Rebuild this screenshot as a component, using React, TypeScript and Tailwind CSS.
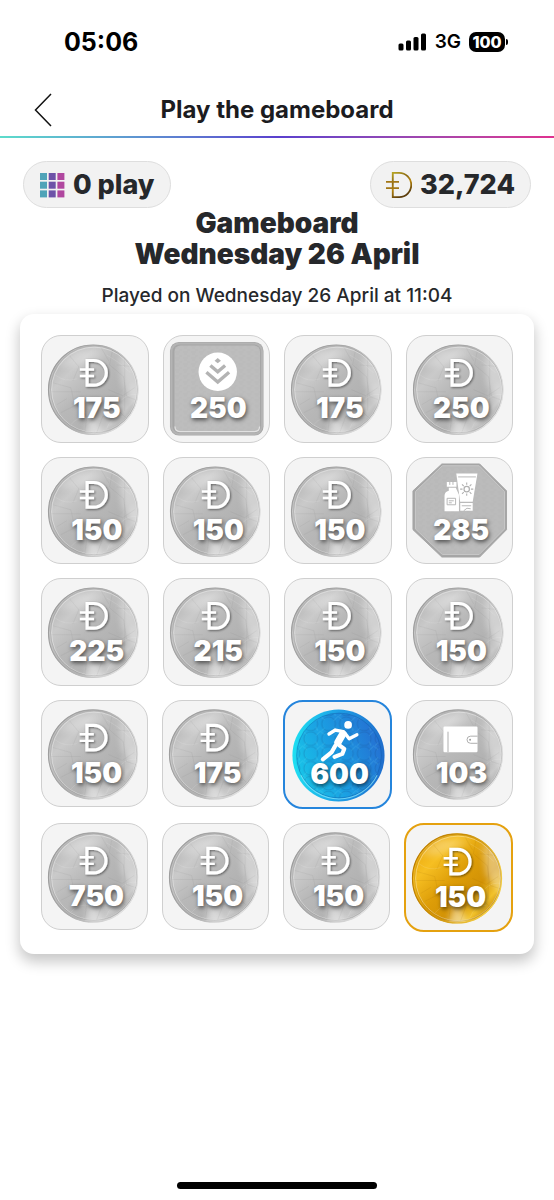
import type { ReactNode } from 'react';

type Art = 'coin' | 'gold' | 'badge' | 'care' | 'run' | 'wallet';

interface Tile {
  value: number;
  art: Art;
}

const coin = (value: number): Tile => ({ value, art: 'coin' });

const board: Tile[][] = [
  [coin(175), { value: 250, art: 'badge' }, coin(175), coin(250)],
  [coin(150), coin(150), coin(150), { value: 285, art: 'care' }],
  [coin(225), coin(215), coin(150), coin(150)],
  [coin(150), coin(175), { value: 600, art: 'run' }, { value: 103, art: 'wallet' }],
  [coin(750), coin(150), coin(150), { value: 150, art: 'gold' }],
];

const borders: Partial<Record<Art, string>> = {
  run: 'border-2 border-[#2585dc]',
  gold: 'border-2 border-[#e5a10f]',
};

/* Gradients and textures shared by every tile */
function ArtDefs() {
  return (
    <svg className="absolute size-0" aria-hidden="true">
      <defs>
        <linearGradient id="silver" x1="0.1" y1="0.1" x2="0.9" y2="0.9">
          <stop offset="0" stopColor="#b3b3b3" />
          <stop offset="0.22" stopColor="#cacaca" />
          <stop offset="0.45" stopColor="#b8b8b8" />
          <stop offset="0.7" stopColor="#b2b2b2" />
          <stop offset="0.86" stopColor="#c9c9c9" />
          <stop offset="1" stopColor="#a6a6a6" />
        </linearGradient>
        <linearGradient id="goldFill" x1="0.1" y1="0.1" x2="0.9" y2="0.9">
          <stop offset="0" stopColor="#eaa90f" />
          <stop offset="0.22" stopColor="#f6bf22" />
          <stop offset="0.48" stopColor="#dd9d08" />
          <stop offset="0.7" stopColor="#d29205" />
          <stop offset="0.86" stopColor="#f2c22a" />
          <stop offset="1" stopColor="#b77b08" />
        </linearGradient>
        <linearGradient id="blueFill" x1="0" y1="0.7" x2="1" y2="0.3">
          <stop offset="0" stopColor="#18c5e8" />
          <stop offset="0.45" stopColor="#1b9de2" />
          <stop offset="1" stopColor="#256fd2" />
        </linearGradient>
        <linearGradient id="blueRim" x1="0" y1="0.5" x2="1" y2="0.5">
          <stop offset="0" stopColor="#1fe0f2" />
          <stop offset="0.5" stopColor="#1d9fe6" />
          <stop offset="1" stopColor="#1f6dcc" />
        </linearGradient>
        <linearGradient id="rim" x1="0" y1="0" x2="1" y2="0.4">
          <stop offset="0" stopColor="#989898" />
          <stop offset="0.5" stopColor="#a9a9a9" />
          <stop offset="1" stopColor="#e2e2e2" />
        </linearGradient>
        <linearGradient id="goldRim" x1="0" y1="0" x2="1" y2="0.4">
          <stop offset="0" stopColor="#b47804" />
          <stop offset="0.5" stopColor="#c98c06" />
          <stop offset="1" stopColor="#f3cd45" />
        </linearGradient>
        <linearGradient id="goldInk" x1="0" y1="0" x2="0.4" y2="1">
          <stop offset="0" stopColor="#b5a321" />
          <stop offset="0.35" stopColor="#8b6914" />
          <stop offset="0.6" stopColor="#b8860b" />
          <stop offset="1" stopColor="#5c3d0c" />
        </linearGradient>
        <filter id="soft" x="-50%" y="-50%" width="200%" height="200%">
          <feGaussianBlur stdDeviation="4" />
        </filter>
        <filter id="drop" x="-20%" y="-20%" width="150%" height="150%">
          <feDropShadow dx="1" dy="1" stdDeviation="1" floodColor="#000" floodOpacity="0.5" />
        </filter>
        <clipPath id="coinClip">
          <circle cx="52.5" cy="55" r="45.5" />
        </clipPath>
        <pattern id="scales" width="18" height="15" patternUnits="userSpaceOnUse">
          <circle cx="9" cy="8" r="7" fill="none" stroke="#123f78" strokeOpacity="0.3" strokeWidth="0.8" />
          <path d="M0 0 5 4M18 1l-4 4M2 15l3-3M16 15l-2-4" stroke="#8ff" strokeOpacity="0.3" strokeWidth="0.6" />
        </pattern>
        <pattern id="brushed" width="8" height="6" patternUnits="userSpaceOnUse">
          <path d="M0 1h5M3 3h5M1 5h3" stroke="#fff" strokeOpacity="0.1" strokeWidth="0.6" />
        </pattern>
      </defs>
    </svg>
  );
}

function DukatPath() {
  return (
    <>
      <path d="M46.3 25.6h6.9a12.4 12.4 0 0 1 0 24.8h-6.9z" strokeWidth="3.2" />
      <path d="M39 34.6h14.3M39 41.2h14.3" strokeWidth="2.4" />
    </>
  );
}

function RoundCoin({ gold = false }: { gold?: boolean }) {
  return (
    <>
      <circle cx="52.5" cy="55" r="45.3" fill={gold ? 'url(#goldFill)' : 'url(#silver)'} />
      <g clipPath="url(#coinClip)">
        <path d="m43 103 8-26 14 26z" fill="#fff" opacity="0.45" filter="url(#soft)" />
        <path d="m78 20 24 6-4 46-16-20z" fill="#fff" opacity="0.4" filter="url(#soft)" />
        <path d="M14 30 36 14l30 4-34 14z" fill="#fff" opacity="0.28" filter="url(#soft)" />
        <path
          d="M10 57h30M12 48l18 5 4 18M28 20l10 12-6 14M72 14l-3 16 14 12 3 20 12 4M20 78l16-8 10 12-2 16M56 98l6-16 18-4 8 8M68 55l14 6 12-8M76 30l18 2M84 22v54M26 64l-10 6M60 12l8 14"
          fill="none"
          stroke={gold ? '#7a5000' : '#707070'}
          strokeOpacity="0.13"
          strokeWidth="0.7"
        />
        <path
          d="M14 40q10 8 22 4M66 20q12 6 24 18M80 66q8-8 18-6M30 90q8-10 20-6M66 94q4-12 16-12"
          fill="none"
          stroke="#fff"
          strokeOpacity="0.18"
          strokeWidth="0.7"
        />
      </g>
      <circle cx="52.5" cy="55" r="45" fill="none" stroke={gold ? 'url(#goldRim)' : 'url(#rim)'} strokeWidth="1.1" />
      <circle cx="53.5" cy="55" r="42.8" fill="none" stroke="#fff" strokeOpacity="0.35" />
      <circle cx="53.2" cy="54.6" r="43.6" fill="none" stroke={gold ? '#8c5c00' : '#777'} strokeOpacity="0.3" strokeWidth="0.8" />
    </>
  );
}

const artwork: Record<Art, ReactNode> = {
  coin: (
    <>
      <RoundCoin />
      <g fill="none" stroke="#fff" filter="url(#drop)">
        <DukatPath />
      </g>
    </>
  ),
  gold: (
    <>
      <RoundCoin gold />
      <g fill="none" stroke="#fff" filter="url(#drop)">
        <DukatPath />
      </g>
    </>
  ),
  badge: (
    <>
      <rect x="7" y="7" width="94" height="94" rx="9" fill="#a6a6a6" />
      <rect x="8.5" y="8.5" width="91" height="91" rx="8" fill="none" stroke="#b4b4b4" strokeWidth="2" />
      <rect x="11.5" y="10.5" width="86" height="87" rx="6" fill="#bbbbbb" />
      <rect x="11.5" y="10.5" width="86" height="87" rx="6" fill="url(#brushed)" />
      <path d="M12 92q0 5 5 5h75q5 0 5-5" fill="none" stroke="#e1e1e1" strokeWidth="1.2" />
      <circle cx="55" cy="37" r="19.3" fill="#fff" />
      <g fill="none" stroke="#b3b3b3" strokeWidth="3.4">
        <path d="m43.6 37.4 11.4 9.8 11.4-9.8" />
        <path d="m47.6 30.6 7.4 6.4 7.4-6.4" />
      </g>
      <path d="m55 23.2 3.2 2.6-3.2 2.7-3.2-2.7z" fill="#b3b3b3" />
    </>
  ),
  care: (
    <>
      <path d="M36 7h38l27 27v39l-27 27.5H36L7 73V34z" fill="#a6a6a6" strokeLinejoin="round" stroke="#a6a6a6" />
      <path d="M36.5 8.8h37L99 34.7v37.6L73.5 98h-37L9.5 72.3V34.7z" fill="#b9b9b9" stroke="#c8c8c8" />
      <path d="M37 11h36l24 24.5v36L73 96H37L11.5 71.5v-36z" fill="url(#brushed)" />
      <path d="M50.5 16.5h21.3L67 45H54.4z" fill="#fff" />
      <path d="M54.5 46.3H67V54H54.5z" fill="#fff" />
      <path d="M41 25h9.7v5H41zM43 31h7l3.2 7v16.5H38.7V39q0-4 4.3-5z" fill="#fff" />
      <path d="M44 25v3M47.2 25v3M41.3 41.5h8.5v6.5h-8.5zM43 44h5M43 46h3M56 49h9.5M58 54q3-4 7-2M52.4 20h17.8" fill="none" stroke="#b0b0b0" strokeWidth="0.9" />
      <circle cx="61" cy="32.3" r="2.7" fill="none" stroke="#b0b0b0" strokeWidth="1.2" />
      <path d="M61 25.6v2.4M61 36.6V39M54.4 32.3h2.4M65.2 32.3h2.4M56.3 27.6l1.7 1.7M64 35.3l1.7 1.7M65.7 27.6 64 29.3M58 35.3 56.3 37" stroke="#b0b0b0" strokeWidth="1.1" />
    </>
  ),
  run: (
    <>
      <circle cx="55" cy="55" r="46.5" fill="url(#blueRim)" />
      <circle cx="55.5" cy="55" r="42.8" fill="url(#blueFill)" />
      <circle cx="55.5" cy="55" r="42.8" fill="url(#scales)" stroke="#0b4f9a" strokeOpacity="0.35" />
      <path d="M17 75a43 43 0 0 0 77 0" fill="none" stroke="#8de9fb" strokeOpacity="0.7" strokeWidth="1.1" />
      <g fill="none" stroke="#fff" strokeLinecap="round" strokeLinejoin="round">
        <path d="m45.4 33.3 6.4-4L60 31" strokeWidth="3.4" />
        <path d="m59.4 33.2-5 8.6" strokeWidth="7.4" />
        <path d="m61.5 32.5 4.3 5.6 7.8-4" strokeWidth="3.4" />
        <path d="m55 44 5.8 4.4-2 5-7.8 3" strokeWidth="4.2" />
        <path d="m51.6 45.4-3.4 6.2-9 7.2" strokeWidth="4.2" />
      </g>
      <circle cx="64.7" cy="24.2" r="3.9" fill="#fff" />
    </>
  ),
  wallet: (
    <>
      <RoundCoin />
      <rect x="37.8" y="26.8" width="34.4" height="26" rx="1.2" fill="#fff" />
      <path d="M42.4 32v20.5M72.2 36.5h-7a3.6 3.6 0 0 0 0 7.2h7" fill="none" stroke="#a5a5a5" strokeWidth="0.9" />
      <circle cx="64.7" cy="40.1" r="1" fill="#999" />
    </>
  ),
};

function BoardTile({ tile }: { tile: Tile }) {
  return (
    <li className={`grid min-w-0 flex-1 rounded-[20px] bg-[#f4f4f4] ${borders[tile.art] ?? 'border border-[#cfcfcf]'}`}>
      <svg viewBox="1 1 106 106" className="col-start-1 row-start-1 block w-full rounded-[18px]" aria-hidden="true">
        {artwork[tile.art]}
      </svg>
      <span className="col-start-1 row-start-1 pt-[58px] pl-1 text-center text-[28px] leading-7 font-black text-white [text-shadow:1px_2px_4px_rgba(0,0,0,0.6)]">
        {tile.value}
      </span>
    </li>
  );
}

function StatusBar() {
  return (
    <div className="flex h-[83px] items-center justify-between pr-[46px] pl-16 text-black">
      <span className="text-[25px] leading-7 font-bold">05:06</span>
      <div className="flex items-center gap-2">
        <svg width="29" height="18" viewBox="0 0 29 18" aria-hidden="true">
          <rect x="0.5" y="10.5" width="5" height="7" rx="1.5" />
          <rect x="8" y="7.5" width="5" height="10" rx="1.5" />
          <rect x="15.5" y="4" width="5" height="13.5" rx="1.5" />
          <rect x="23" y="0.5" width="5" height="17" rx="1.5" />
        </svg>
        <span className="text-[19px] leading-6 font-semibold">3G</span>
        <div className="flex items-center gap-px">
          <span className="flex h-5 w-9 items-center justify-center rounded-[7px] bg-black text-base leading-5 font-extrabold text-white">
            100
          </span>
          <span className="h-1.5 w-0.5 rounded-r-full bg-black" />
        </div>
      </div>
    </div>
  );
}

function NavBar() {
  return (
    <header>
      <div className="grid h-[53px] grid-cols-[34px_1fr_34px] items-center px-[26px]">
        <button type="button" aria-label="Back" className="flex h-10 items-center justify-center">
          <svg width="18" height="34" viewBox="0 0 18 34" fill="none" stroke="#111" strokeWidth="1.5" aria-hidden="true">
            <path d="M17 1 1.5 17 17 33" />
          </svg>
        </button>
        <h1 className="text-center text-2xl leading-8 font-bold text-[#1c1c1f]">Play the gameboard</h1>
      </div>
      <div className="h-0.5 bg-linear-to-r from-[#5cdccb] via-[#5a3fce] to-[#e0308f]" />
    </header>
  );
}

function Pill({ icon, children }: { icon: ReactNode; children: ReactNode }) {
  return (
    <div className="flex h-[47px] items-center gap-2 rounded-full border border-[#dedede] bg-[#f2f2f2] px-[15px] text-[27px] leading-8 font-extrabold">
      {icon}
      <span>{children}</span>
    </div>
  );
}

function GridIcon() {
  const columns = ['#4fa3b8', '#6d52a8', '#b0479f'];
  return (
    <svg width="26" height="26" viewBox="0 0 26 26" aria-hidden="true">
      {columns.map((fill, col) =>
        [0, 1, 2].map(row => (
          <rect key={`${col}-${row}`} x={1 + col * 8.7} y={1 + row * 8.7} width="7" height="7" fill={fill} />
        ))
      )}
    </svg>
  );
}

export default function App() {
  return (
    <div className="flex min-h-screen flex-col bg-white font-['Inter','Liberation_Sans',sans-serif] text-[#26282b]">
      <ArtDefs />
      <StatusBar />
      <NavBar />

      <main className="flex flex-col pt-[23px]">
        {/* Balance */}
        <div className="flex justify-between px-[23px]">
          <Pill icon={<GridIcon />}>0 play</Pill>
          <Pill
            icon={
              <svg width="26" height="28" viewBox="39 24 28 28" fill="none" stroke="url(#goldInk)" aria-hidden="true">
                <path d="M46.3 25h6.9a13 13 0 0 1 0 26h-6.9z" strokeWidth="2" />
                {/* thin rects, since a gradient stroke is dropped on flat lines */}
                <path d="M39 33.8h14v1.8H39zM39 40.4h14v1.8H39z" fill="#a27716" stroke="none" />
              </svg>
            }
          >
            32,724
          </Pill>
        </div>

        <h2 className="text-center text-[28px] leading-[31px] font-black">
          Gameboard
          <br />
          Wednesday 26 April
        </h2>
        <p className="pt-3.5 text-center text-[19px] leading-6 font-medium">Played on Wednesday 26 April at 11:04</p>

        {/* Board */}
        <section className="mx-5 mt-1.5 flex flex-col gap-3.5 rounded-[14px] bg-white px-[21px] pt-[21px] pb-[22px] shadow-[0_7px_14px_1px_rgba(0,0,0,0.22)]">
          {board.map((row, i) => (
            <ul key={i} className="flex items-start gap-3.5">
              {row.map((tile, j) => (
                <BoardTile key={j} tile={tile} />
              ))}
            </ul>
          ))}
        </section>
      </main>

      <div className="mx-auto mt-auto mb-[11px] h-[7px] w-[36%] rounded-full bg-black" />
    </div>
  );
}
